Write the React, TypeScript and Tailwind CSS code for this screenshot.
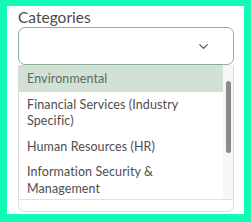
import { ChevronDown } from 'lucide-react'

const OPTIONS = [
  'Environmental',
  'Financial Services (Industry Specific)',
  'Human Resources (HR)',
  'Information Security & Management',
]

export default function App() {
  return (
    <div
      className="h-[222px] w-[251px] bg-[#12fbb6] pl-[7px] pt-[6px]"
      style={{ fontFamily: 'Lato, "Noto Sans", sans-serif' }}
    >
      <div className="h-[208px] w-[237px] bg-white px-[11px] pt-[2px]">
        <label className="block text-[15.5px] leading-[19px] text-[#4a4a4a]">Categories</label>

        {/* Select trigger */}
        <div className="flex h-[38px] w-[216px] items-center justify-end rounded-[7px] border border-[#8fae98] pr-[22px]">
          <ChevronDown className="h-[15px] w-[15px] text-[#444]" strokeWidth={1.75} />
        </div>

        {/* Menu */}
        <div className="h-[147px] w-[216px] rounded-b-[7px] border-x border-b border-[#dcdcdc]">
          <div className="flex h-[135px] border-b border-[#e0e0e0]">
            <ul className="flex-1 text-[12.5px] leading-[16.5px] tracking-[0.1px] text-[#4e4e4e]">
              {OPTIONS.map((o, i) => (
                <li
                  key={o}
                  className={
                    i === 0
                      ? 'bg-[#d3e0d6] px-[8px] pb-[5px] pt-[5.5px] text-[#5c6b60]'
                      : 'py-[4.5px] pl-[8px] pr-[30px]'
                  }
                >
                  {o}
                </li>
              ))}
            </ul>
            <div className="flex w-[10px] justify-center bg-[#f6f6f6] pt-[16px]">
              <div className="h-[72px] w-[5px] rounded-full bg-[#8a8a8a]" />
            </div>
          </div>
        </div>
      </div>
    </div>
  )
}
